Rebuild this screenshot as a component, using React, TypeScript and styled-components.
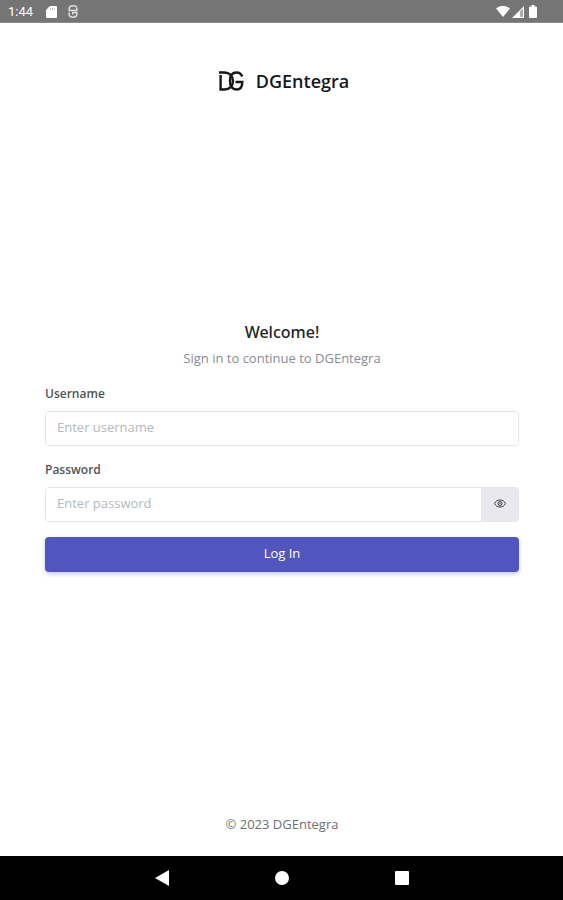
import React, { useState } from "react";
import styled, { createGlobalStyle } from "styled-components";

const GlobalStyle = createGlobalStyle`
  *, *::before, *::after { box-sizing: border-box; }
  body {
    margin: 0;
    background: #fff;
    color: #495057;
    font: 13px/20px "Open Sans", "Noto Sans", sans-serif;
  }
  button, input { font: inherit; }
`;

const Screen = styled.div`
  min-height: 100vh;
  display: flex;
  flex-direction: column;
`;

const StatusBar = styled.div`
  height: 23px;
  padding: 1px 26px 0 8px;
  display: flex;
  align-items: center;
  justify-content: space-between;
  background: #757575;
  border-bottom: 1px solid #8c8c8c;
  color: #fff;
`;

const StatusGroup = styled.div<{ $gap: number }>`
  display: flex;
  align-items: center;
  gap: ${(p) => p.$gap}px;
`;

const Clock = styled.time`
  margin-right: 2px;
  font: 400 13px/20px Roboto, sans-serif;
`;

const BatteryBox = styled.span`
  display: flex;
  padding-left: 3px;
`;

const Page = styled.div`
  flex: 1;
  display: flex;
  flex-direction: column;
  justify-content: space-between;
  padding: 46px 44px 22px 45px;
`;

const Brand = styled.header`
  display: flex;
  align-items: center;
  justify-content: center;
  gap: 12px;
  padding-left: 4px;
  color: #16181b;
`;

const BrandName = styled.span`
  font-size: 18px;
  line-height: 24px;
  font-weight: 600;
`;

const Main = styled.main`
  padding-bottom: 16px;
`;

const Title = styled.h1`
  margin: 0 0 4px;
  font: 500 16px/24px "Noto Sans", sans-serif;
  text-align: center;
  color: #212529;
`;

const Subtitle = styled.p`
  margin: 0 0 16px;
  text-align: center;
  color: #888d92;
`;

const Form = styled.form`
  display: flex;
  flex-direction: column;
  gap: 14px;
`;

const Field = styled.div`
  display: flex;
  flex-direction: column;
  gap: 7px;
`;

const Label = styled.label`
  font-size: 12px;
  font-weight: 600;
  color: #50555a;
`;

const InputGroup = styled.div`
  display: flex;
  height: 35px;
  border: 1px solid #e3e6e9;
  border-radius: 4px;
  overflow: hidden;
  &:focus-within { border-color: #a9abdf; }
`;

const TextInput = styled.input`
  flex: 1;
  min-width: 0;
  padding: 0 11px 2px;
  border: 0;
  outline: 0;
  background: #fff;
  color: #495057;
  &::placeholder { color: #b5babf; opacity: 1; }
`;

const RevealButton = styled.button`
  width: 37px;
  padding: 0 0 2px;
  border: 0;
  display: grid;
  place-items: center;
  background: #e9e8ef;
  color: #3d4045;
  cursor: pointer;
`;

const SubmitButton = styled.button`
  height: 35px;
  margin-top: 1px;
  padding: 0 0 2px;
  border: 0;
  border-radius: 4px;
  background: #5156be;
  color: #fff;
  box-shadow: 0 2px 4px #c5c7ec;
  cursor: pointer;
`;

const Footer = styled.footer`
  text-align: center;
  color: #6c7075;
`;

const NavBar = styled.nav`
  height: 44px;
  display: flex;
  align-items: center;
  justify-content: center;
  gap: 88px;
  background: #000;
`;

const NavButton = styled.button`
  width: 32px;
  height: 32px;
  padding: 0;
  border: 0;
  display: grid;
  place-items: center;
  background: none;
  color: #fff;
`;

const SdCardIcon = () => (
  <svg width="11" height="12" viewBox="0 0 11 12" aria-hidden="true">
    <path fill="#fff" d="M4 0h6a1 1 0 0 1 1 1v10a1 1 0 0 1-1 1H1a1 1 0 0 1-1-1V4z" />
    <path stroke="#c0c0c0" d="M4.500 2v2M6.500 2v2M8.500 2v2" />
  </svg>
);

const SyncIcon = () => (
  <svg width="10" height="13" viewBox="0 0 10 13" fill="none" stroke="#e0e0e0" strokeWidth="1.500" aria-hidden="true">
    <path d="M8.800 2.500C8.200.4 1.200-.2 1.200 3.500V5.500H8.800V3" />
    <path d="M1.200 7.500v2c0 3.500 7.600 3.500 7.600 0v-2H4M5 7.500v2" />
  </svg>
);

const WifiIcon = () => (
  <svg width="14" height="11" viewBox="0 0 14 11" aria-hidden="true">
    <path fill="#fff" d="M0 2.600C4-.9 10-.9 14 2.600L7 11z" />
  </svg>
);

const SignalIcon = () => (
  <svg width="12" height="12" viewBox="0 0 12 12" aria-hidden="true">
    <path fill="#fff" fillRule="evenodd" d="M12 0v12H0zM8.500 5v5.500H11V3z" />
    <path fill="#aaa" d="M8.500 5 11 3v7.500H8.500z" />
  </svg>
);

const BatteryIcon = () => (
  <svg width="8" height="13" viewBox="0 0 8 13" aria-hidden="true">
    <path fill="#fff" d="M2.500 0h3v1.400H7a1 1 0 0 1 1 1V12a1 1 0 0 1-1 1H1a1 1 0 0 1-1-1V2.400a1 1 0 0 1 1-1h1.500z" />
  </svg>
);

const Logo = () => (
  <svg width="25" height="20" viewBox="0 0 25 20" fill="none" stroke="currentColor" aria-hidden="true">
    <path strokeWidth="2.400" d="M0 1.500h5.500C10.500 1.500 14 5 14 10s-3.500 8.500-8.500 8.500H1.600V4" />
    <path strokeWidth="2.400" d="M23.200 5.500C22.200 2.800 20 1.500 17.500 1.500c-4.300 0-6.500 3.500-6.500 8.500s2.200 8.500 6.500 8.500c3.700 0 5.800-2.500 5.800-7.500H16.500" />
  </svg>
);

const EyeIcon = () => (
  <svg width="12" height="9" viewBox="0 0 12 9" fill="none" stroke="currentColor" aria-hidden="true">
    <path d="M.7 4.500C2-.2 10-.2 11.300 4.500 10 9.200 2 9.200.7 4.500z" />
    <circle cx="6" cy="4.500" r="2" />
    <circle cx="6" cy="4.500" r=".7" fill="currentColor" stroke="none" />
  </svg>
);

export default function App() {
  const [visible, setVisible] = useState(false);
  return (
    <Screen>
      <GlobalStyle />
      <StatusBar>
        <StatusGroup $gap={11}>
          <Clock>1:44</Clock>
          <SdCardIcon />
          <SyncIcon />
        </StatusGroup>
        <StatusGroup $gap={2}>
          <WifiIcon />
          <SignalIcon />
          <BatteryBox><BatteryIcon /></BatteryBox>
        </StatusGroup>
      </StatusBar>
      <Page>
        <Brand>
          <Logo />
          <BrandName>DGEntegra</BrandName>
        </Brand>
        <Main>
          <Title>Welcome!</Title>
          <Subtitle>Sign in to continue to DGEntegra</Subtitle>
          <Form onSubmit={(e) => e.preventDefault()}>
            <Field>
              <Label htmlFor="username">Username</Label>
              <InputGroup>
                <TextInput id="username" type="text" placeholder="Enter username" />
              </InputGroup>
            </Field>
            <Field>
              <Label htmlFor="password">Password</Label>
              <InputGroup>
                <TextInput id="password" type={visible ? "text" : "password"} placeholder="Enter password" />
                <RevealButton type="button" aria-label="Show password" aria-pressed={visible} onClick={() => setVisible(!visible)}>
                  <EyeIcon />
                </RevealButton>
              </InputGroup>
            </Field>
            <SubmitButton type="submit">Log In</SubmitButton>
          </Form>
        </Main>
        <Footer>© 2023 DGEntegra</Footer>
      </Page>
      <NavBar aria-label="System navigation">
        <NavButton type="button" aria-label="Back">
          <svg width="14" height="16" viewBox="0 0 14 16"><path fill="currentColor" d="M14 0v16L0 8z" /></svg>
        </NavButton>
        <NavButton type="button" aria-label="Home">
          <svg width="14" height="14" viewBox="0 0 14 14"><circle cx="7" cy="7" r="7" fill="currentColor" /></svg>
        </NavButton>
        <NavButton type="button" aria-label="Recent apps">
          <svg width="14" height="14" viewBox="0 0 14 14"><rect width="14" height="14" rx="1" fill="currentColor" /></svg>
        </NavButton>
      </NavBar>
    </Screen>
  );
}
